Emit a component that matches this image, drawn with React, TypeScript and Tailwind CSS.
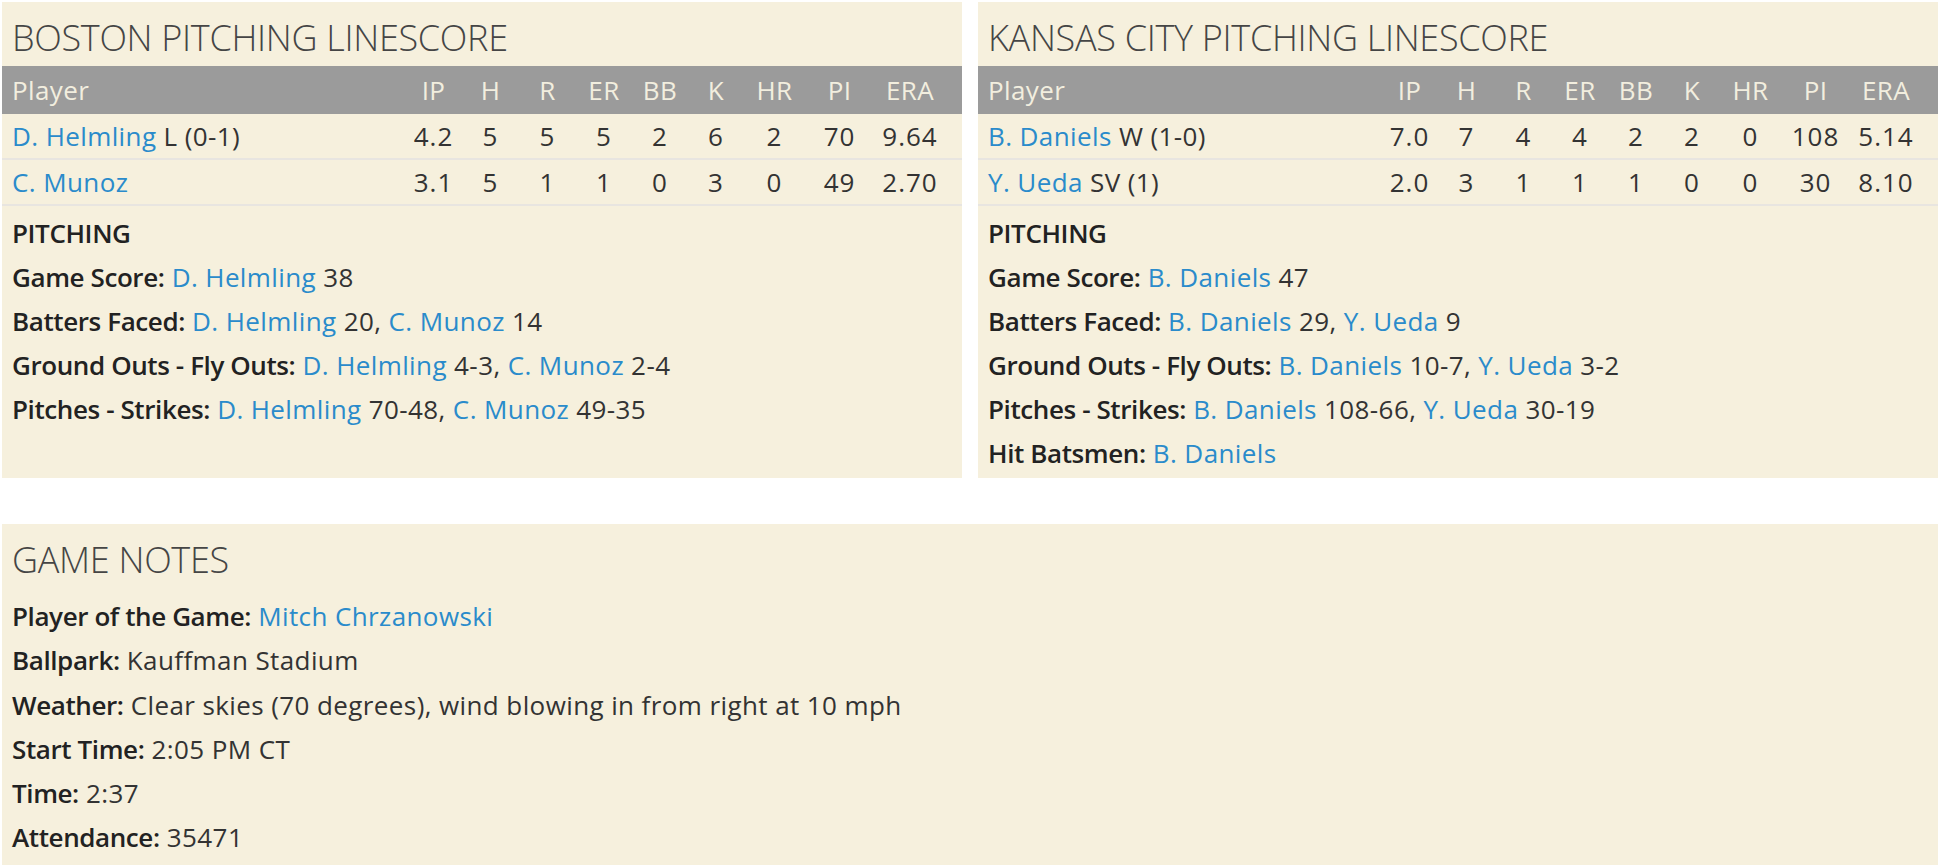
import React from 'react'

type Pitcher = {
  name: string
  note?: string
  stats: string[]
}

type Part = { link?: string; text?: string }

const COLS = ['IP', 'H', 'R', 'ER', 'BB', 'K', 'HR', 'PI', 'ERA']

const boston: Pitcher[] = [
  { name: 'D. Helmling', note: 'L (0-1)', stats: ['4.2', '5', '5', '5', '2', '6', '2', '70', '9.64'] },
  { name: 'C. Munoz', stats: ['3.1', '5', '1', '1', '0', '3', '0', '49', '2.70'] },
]

const kansas: Pitcher[] = [
  { name: 'B. Daniels', note: 'W (1-0)', stats: ['7.0', '7', '4', '4', '2', '2', '0', '108', '5.14'] },
  { name: 'Y. Ueda', note: 'SV (1)', stats: ['2.0', '3', '1', '1', '1', '0', '0', '30', '8.10'] },
]

const bostonNotes: [string, Part[]][] = [
  ['Game Score:', [{ link: 'D. Helmling' }, { text: ' 38' }]],
  ['Batters Faced:', [{ link: 'D. Helmling' }, { text: ' 20, ' }, { link: 'C. Munoz' }, { text: ' 14' }]],
  ['Ground Outs - Fly Outs:', [{ link: 'D. Helmling' }, { text: ' 4-3, ' }, { link: 'C. Munoz' }, { text: ' 2-4' }]],
  ['Pitches - Strikes:', [{ link: 'D. Helmling' }, { text: ' 70-48, ' }, { link: 'C. Munoz' }, { text: ' 49-35' }]],
]

const kansasNotes: [string, Part[]][] = [
  ['Game Score:', [{ link: 'B. Daniels' }, { text: ' 47' }]],
  ['Batters Faced:', [{ link: 'B. Daniels' }, { text: ' 29, ' }, { link: 'Y. Ueda' }, { text: ' 9' }]],
  ['Ground Outs - Fly Outs:', [{ link: 'B. Daniels' }, { text: ' 10-7, ' }, { link: 'Y. Ueda' }, { text: ' 3-2' }]],
  ['Pitches - Strikes:', [{ link: 'B. Daniels' }, { text: ' 108-66, ' }, { link: 'Y. Ueda' }, { text: ' 30-19' }]],
  ['Hit Batsmen:', [{ link: 'B. Daniels' }]],
]

const gameNotes: [string, Part[]][] = [
  ['Player of the Game:', [{ link: 'Mitch Chrzanowski' }]],
  ['Ballpark:', [{ text: 'Kauffman Stadium' }]],
  ['Weather:', [{ text: 'Clear skies (70 degrees), wind blowing in from right at 10 mph' }]],
  ['Start Time:', [{ text: '2:05 PM CT' }]],
  ['Time:', [{ text: '2:37' }]],
  ['Attendance:', [{ text: '35471' }]],
]

const gridCols = 'grid grid-cols-[393px_57px_57px_57px_56px_56px_56px_61px_69px_72px] items-center pl-[10px] pr-[16px]'

const Title = ({ children }: { children: React.ReactNode }) => (
  <h2 className="pt-[13px] pb-[5px] pl-[10px] text-[36px] leading-[46px] font-light tracking-[-0.3px] text-[#454545] uppercase">
    {children}
  </h2>
)

const NoteLine = ({ label, parts }: { label: string; parts: Part[] }) => (
  <div>
    <span className="font-semibold tracking-[-0.4px] text-[#222]">{label}</span>{' '}
    {parts.map((p, i) =>
      p.link ? (
        <a key={i} className="text-[#2a8bcb]">{p.link}</a>
      ) : (
        <span key={i}>{p.text}</span>
      )
    )}
  </div>
)

const Linescore = ({ team, pitchers, notes }: { team: string; pitchers: Pitcher[]; notes: [string, Part[]][] }) => (
  <section className="bg-[#f6f0dd] pb-[3px]">
    <Title>{team} Pitching Linescore</Title>

    {/* table header */}
    <div className={`${gridCols} h-[48px] bg-[#9b9b9b] text-[#f2eedf]`}>
      <div>Player</div>
      {COLS.map((c) => (
        <div key={c} className="text-center">{c}</div>
      ))}
    </div>

    {pitchers.map((p) => (
      <div key={p.name} className={`${gridCols} h-[46px] border-b-2 border-[#e8e5e0]`}>
        <div>
          <a className="text-[#2a8bcb]">{p.name}</a>
          {p.note && <span> {p.note}</span>}
        </div>
        {p.stats.map((s, i) => (
          <div key={i} className="text-center tracking-[1px]">{s}</div>
        ))}
      </div>
    ))}

    <div className="pt-[5px] px-[10px] leading-[44px]">
      <div className="font-semibold tracking-[-0.4px] text-[#222]">PITCHING</div>
      {notes.map(([label, parts]) => (
        <NoteLine key={label} label={label} parts={parts} />
      ))}
    </div>
  </section>
)

export default function App() {
  return (
    <div
      className="w-[1944px] min-h-[866px] bg-white pt-[2px] pl-[2px] text-[26px] tracking-[0.4px] text-[#333]"
      style={{ fontFamily: '"Open Sans", "Noto Sans", sans-serif' }}
    >
      <div className="w-[1936px]">
        <div className="grid grid-cols-2 gap-4">
          <Linescore team="Boston" pitchers={boston} notes={bostonNotes} />
          <Linescore team="Kansas City" pitchers={kansas} notes={kansasNotes} />
        </div>

        {/* Game notes */}
        <section className="mt-[46px] bg-[#f6f0dd] pb-[5px]">
          <Title>Game Notes</Title>
          <div className="pt-[6px] px-[10px] leading-[44.3px]">
            {gameNotes.map(([label, parts]) => (
              <NoteLine key={label} label={label} parts={parts} />
            ))}
          </div>
        </section>
      </div>
    </div>
  )
}
